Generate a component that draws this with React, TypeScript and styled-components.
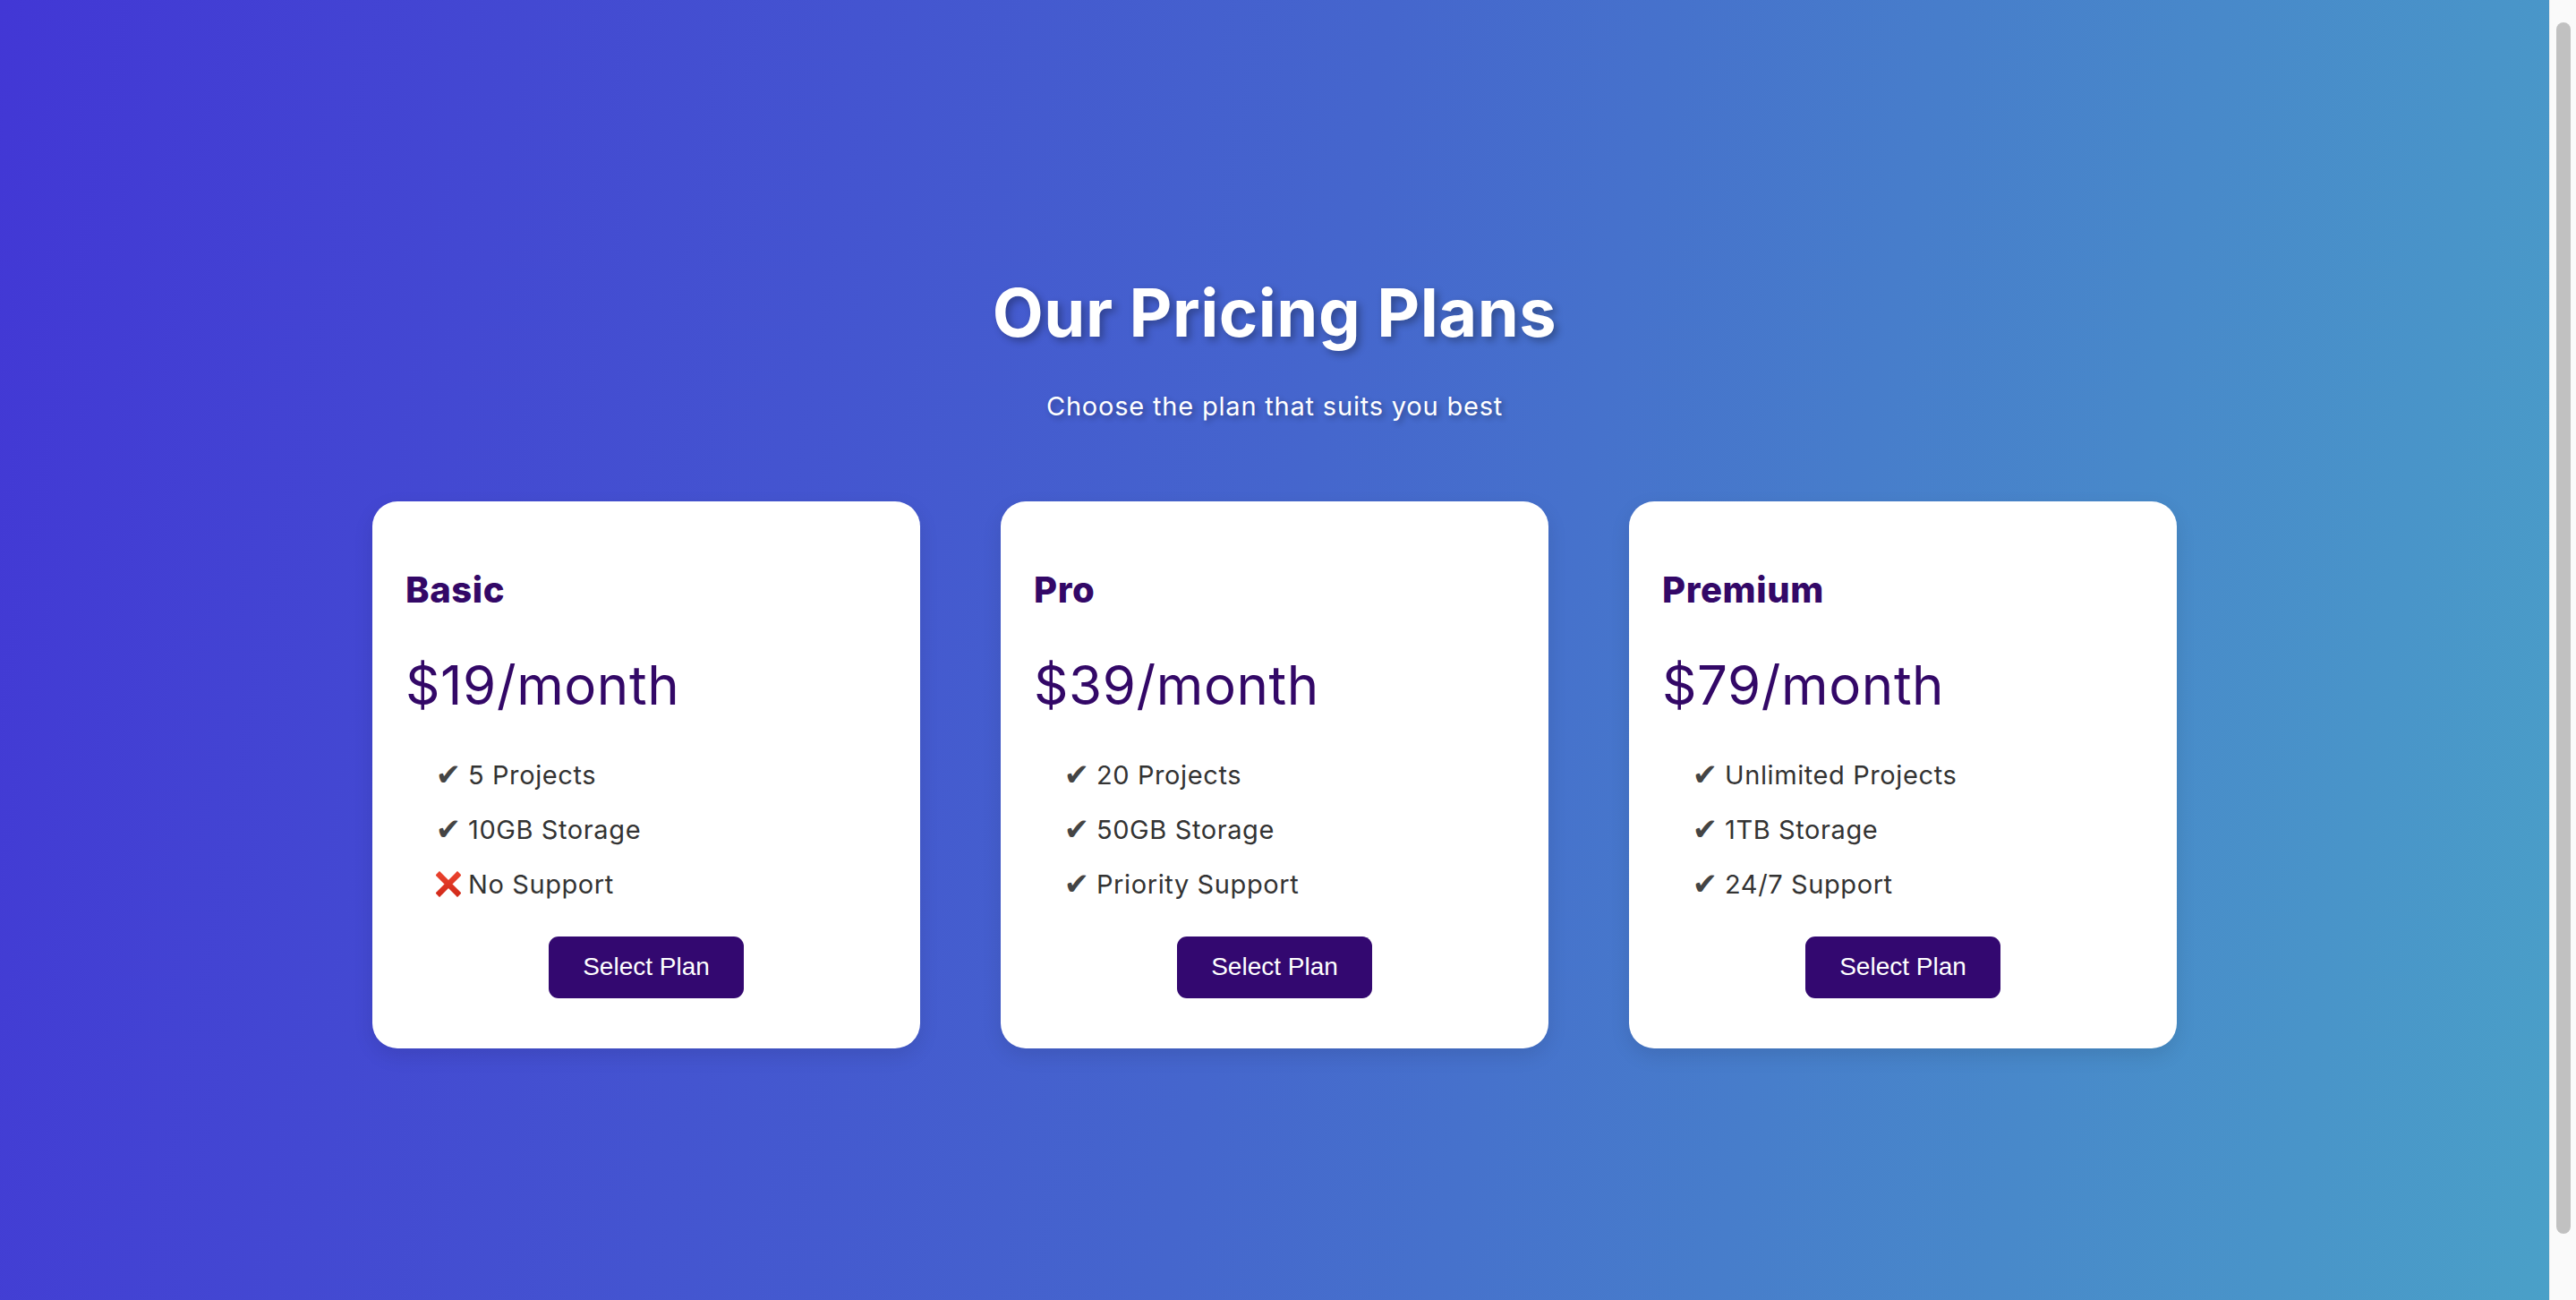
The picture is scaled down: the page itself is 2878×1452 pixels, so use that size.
import React from "react";
import styled, { createGlobalStyle } from "styled-components";

const GlobalStyle = createGlobalStyle`
  html, body {
    margin: 0;
    padding: 0;
    height: 100%;
    overflow: hidden;
  }
  #root { height: 100%; }
  * { box-sizing: border-box; }
`;

const Frame = styled.div`
  display: flex;
  height: 100vh;
  width: 100vw;
`;

const Page = styled.main`
  flex: 1;
  display: flex;
  flex-direction: column;
  align-items: center;
  padding-top: 305px;
  background: linear-gradient(100deg, #4237d5 0%, #4566cd 50%, #4aa0c8 100%);
  font-family: Inter, "Noto Sans", sans-serif;
`;

const Title = styled.h1`
  margin: 0;
  font-size: 74px;
  font-weight: 700;
  line-height: 1.2;
  color: #ffffff;
  letter-spacing: 0.5px;
  text-shadow: 4px 4px 8px rgba(0, 0, 0, 0.3);
`;

const Subtitle = styled.p`
  margin: 43px 0 0;
  font-size: 29px;
  font-weight: 400;
  line-height: 1.2;
  letter-spacing: 0.8px;
  color: #ffffff;
  text-shadow: 3px 3px 6px rgba(0, 0, 0, 0.3);
`;

const Cards = styled.section`
  display: flex;
  gap: 90px;
  margin-top: 88px;
`;

const Card = styled.article`
  width: 612px;
  height: 611px;
  background: #ffffff;
  border-radius: 28px;
  padding: 79px 37px 0;
  display: flex;
  flex-direction: column;
  box-shadow: 0 8px 22px rgba(0, 0, 0, 0.1);
`;

const PlanName = styled.h2`
  margin: 0;
  font-size: 40px;
  font-weight: 800;
  line-height: 1;
  letter-spacing: 0.6px;
  color: #330867;
`;

const Price = styled.div`
  margin-top: 56px;
  font-size: 60px;
  font-weight: 400;
  line-height: 1;
  letter-spacing: 0.6px;
  color: #330867;
`;

const Features = styled.ul`
  list-style: none;
  margin: 49px 0 0;
  padding: 0 0 0 34px;
  display: flex;
  flex-direction: column;
  gap: 18px;
`;

const Feature = styled.li`
  display: flex;
  align-items: center;
  gap: 8px;
  height: 43px;
  font-size: 29px;
  letter-spacing: 0.6px;
  color: #333333;
`;

const Check = styled.span`
  width: 28px;
  display: inline-flex;
  justify-content: center;
  font-family: "DejaVu Sans", sans-serif;
  font-size: 34px;
  color: #444444;
  line-height: 1;
  letter-spacing: 0;
`;

const CrossBox = styled.span`
  width: 28px;
  display: inline-flex;
  justify-content: center;
`;

const ButtonRow = styled.div`
  display: flex;
  justify-content: center;
  margin-top: 37px;
`;

const SelectButton = styled.button`
  height: 69px;
  padding: 0 38px;
  border: none;
  border-radius: 11px;
  background: #330870;
  color: #ffffff;
  font-family: "Liberation Sans", Arial, sans-serif;
  font-size: 28px;
  cursor: pointer;
`;

const ScrollTrack = styled.div`
  width: 30px;
  flex-shrink: 0;
  background: #fafafa;
  border-left: 1px solid #ececec;
  padding: 25px 6px 74px 7px;
  display: flex;
`;

const ScrollThumb = styled.div`
  flex: 1;
  background: #c1c1c1;
  border-radius: 8px;
`;

type Item = { text: string; ok: boolean };
type Plan = { name: string; price: string; items: Item[] };

const plans: Plan[] = [
  {
    name: "Basic",
    price: "$19/month",
    items: [
      { text: "5 Projects", ok: true },
      { text: "10GB Storage", ok: true },
      { text: "No Support", ok: false },
    ],
  },
  {
    name: "Pro",
    price: "$39/month",
    items: [
      { text: "20 Projects", ok: true },
      { text: "50GB Storage", ok: true },
      { text: "Priority Support", ok: true },
    ],
  },
  {
    name: "Premium",
    price: "$79/month",
    items: [
      { text: "Unlimited Projects", ok: true },
      { text: "1TB Storage", ok: true },
      { text: "24/7 Support", ok: true },
    ],
  },
];

const Cross = () => (
  <CrossBox>
    <svg width="28" height="29" viewBox="0 0 28 29" aria-hidden="true">
      <defs>
        <linearGradient id="xg" x1="0" y1="0" x2="0" y2="1">
          <stop offset="0" stopColor="#e8402c" />
          <stop offset="1" stopColor="#d42c1c" />
        </linearGradient>
      </defs>
      <path
        d="M4 4.5 L24 24.5 M24 4.5 L4 24.5"
        stroke="url(#xg)"
        strokeWidth="6.5"
        strokeLinecap="square"
        fill="none"
      />
    </svg>
  </CrossBox>
);

export default function App() {
  return (
    <>
      <GlobalStyle />
      <Frame>
        <Page>
          <Title>Our Pricing Plans</Title>
          <Subtitle>Choose the plan that suits you best</Subtitle>
          <Cards>
            {plans.map((p) => (
              <Card key={p.name}>
                <PlanName>{p.name}</PlanName>
                <Price>{p.price}</Price>
                <Features>
                  {p.items.map((it) => (
                    <Feature key={it.text}>
                      {it.ok ? <Check>✔</Check> : <Cross />}
                      {it.text}
                    </Feature>
                  ))}
                </Features>
                <ButtonRow>
                  <SelectButton>Select Plan</SelectButton>
                </ButtonRow>
              </Card>
            ))}
          </Cards>
        </Page>
        <ScrollTrack>
          <ScrollThumb />
        </ScrollTrack>
      </Frame>
    </>
  );
}
